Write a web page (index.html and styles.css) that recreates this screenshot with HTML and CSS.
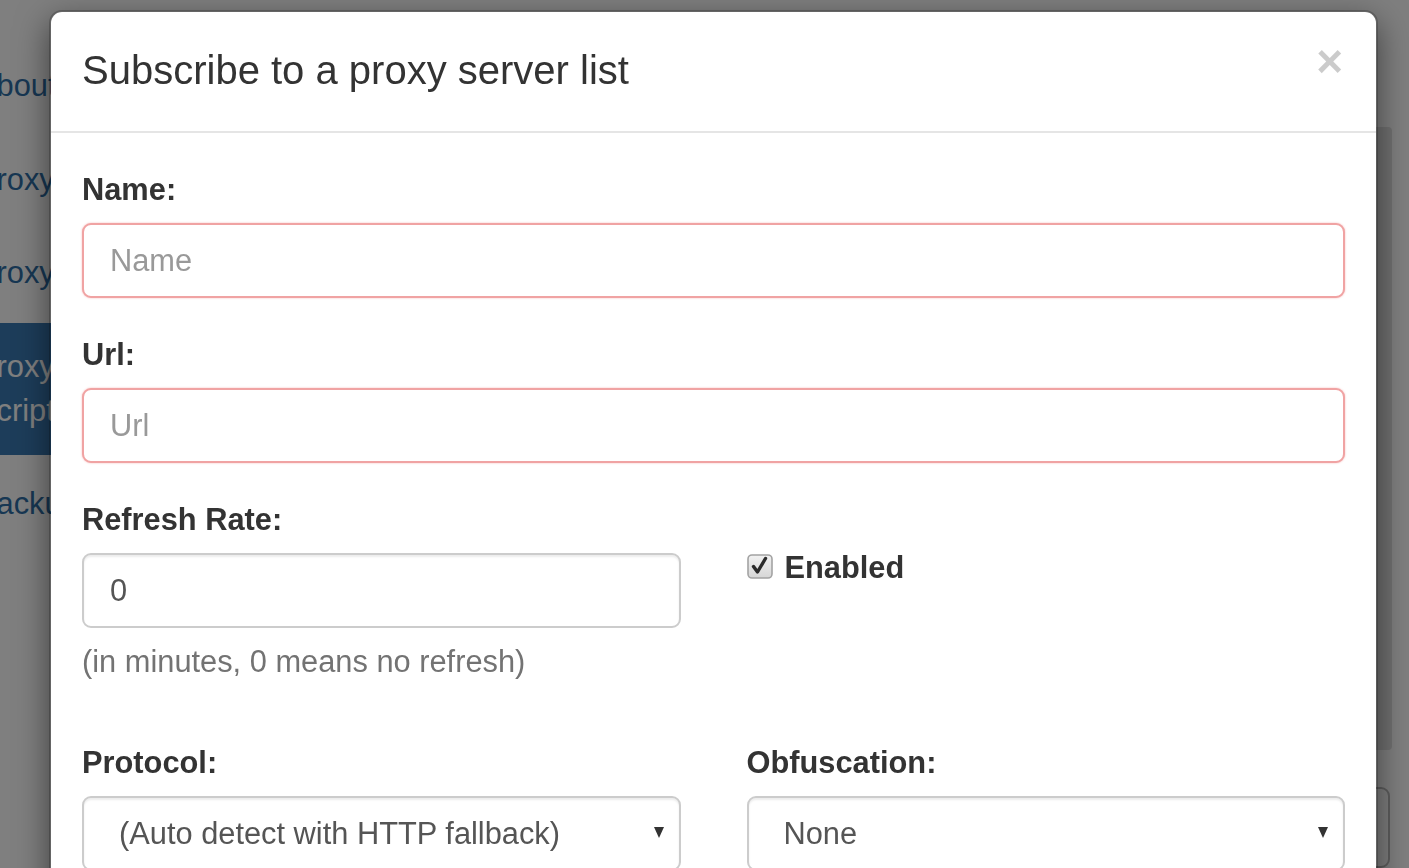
FILE: index.html
```html
<!DOCTYPE html>
<html lang="en">
<head>
<meta charset="utf-8">
<title>Subscribe to a proxy server list</title>
<link rel="stylesheet" href="styles.css">
</head>
<body>
<div class="page">
  <nav class="sidebar">
    <a class="nav-link">About</a>
    <a class="nav-link">Proxy Servers</a>
    <a class="nav-link">Proxy Rules</a>
    <a class="nav-link active">Proxy<br>Scripts</a>
    <a class="nav-link">Backup</a>
  </nav>
  <main class="content">
    <div class="panel"></div>
    <div class="control"></div>
  </main>
</div>
<div class="backdrop"></div>
<div class="modal" role="dialog">
  <div class="modal-header">
    <h4 class="modal-title">Subscribe to a proxy server list</h4>
    <button class="close" type="button">&times;</button>
  </div>
  <div class="modal-body">
    <div class="form-group">
      <label class="label">Name:</label>
      <input class="form-control invalid" type="text" placeholder="Name">
    </div>
    <div class="form-group">
      <label class="label">Url:</label>
      <input class="form-control invalid" type="text" placeholder="Url">
    </div>
    <div class="row form-group">
      <div class="col">
        <label class="label">Refresh Rate:</label>
        <input class="form-control" type="text" value="0">
        <p class="help">(in minutes, 0 means no refresh)</p>
      </div>
      <div class="col">
        <div class="checkbox">
          <svg class="check" width="26" height="25" viewBox="0 0 26 25">
            <defs>
              <linearGradient id="cb" x1="0" y1="0" x2="0" y2="1">
                <stop offset="0" stop-color="#f2f2f2"/>
                <stop offset="1" stop-color="#d6d6d6"/>
              </linearGradient>
            </defs>
            <rect x="1" y="1" width="24" height="23" rx="4" fill="url(#cb)" stroke="#a3a3a3" stroke-width="1.6"/>
            <path d="M6.5 12.5 L10.5 18 L18.5 4.5" fill="none" stroke="#2b2b2b" stroke-width="3.4" stroke-linecap="round" stroke-linejoin="round"/>
          </svg>
          <span class="check-label">Enabled</span>
        </div>
      </div>
    </div>
    <div class="row">
      <div class="col">
        <label class="label">Protocol:</label>
        <div class="select-wrap">
          <select class="form-control select">
            <option>(Auto detect with HTTP fallback)</option>
          </select>
        </div>
      </div>
      <div class="col">
        <label class="label">Obfuscation:</label>
        <div class="select-wrap">
          <select class="form-control select">
            <option>None</option>
          </select>
        </div>
      </div>
    </div>
  </div>
</div>
</body>
</html>
```
FILE: styles.css
```css
html, body {
  margin: 0;
  padding: 0;
  height: 100%;
  overflow: hidden;
}

body {
  font-family: "Liberation Sans", Arial, sans-serif;
  font-size: 30.8px;
  line-height: 44px;
  color: #333;
  background: #fff;
}

/* page behind the dialog */
.page {
  display: flex;
  height: 868px;
}

.sidebar {
  flex: 0 0 330px;
  margin-left: -57px;
  padding-top: 42px;
  display: flex;
  flex-direction: column;
  gap: 5.5px;
}

.nav-link {
  display: block;
  padding: 22px 33px;
  line-height: 44px;
  color: #2f6fa6;
  white-space: nowrap;
  border-radius: 9px;
}

.nav-link.active {
  background: #3a7bb4;
  color: #fff;
}

.content {
  flex: 1;
  display: flex;
  flex-direction: column;
  padding: 127px 17px 0 40px;
}

.panel {
  height: 651px;
  background: #e2e2e2;
  border-radius: 4px;
}

.control {
  margin-top: 37px;
  margin-right: 2px;
  height: 80px;
  border: 2px solid #bdbdbd;
  border-radius: 9px;
  background: #fff;
}

.backdrop {
  position: fixed;
  inset: 0;
  background: rgba(0, 0, 0, 0.5);
}

/* dialog */
.modal {
  position: absolute;
  top: 10px;
  left: 49px;
  width: 1329px;
  height: 900px;
  box-sizing: border-box;
  background: #fff;
  background-clip: padding-box;
  border: 2px solid rgba(0, 0, 0, 0.2);
  border-radius: 13px;
  box-shadow: 0 11px 33px rgba(0, 0, 0, 0.5);
}

.modal-header {
  display: flex;
  justify-content: space-between;
  align-items: flex-start;
  padding: 29.5px 33px 32.5px 31px;
  border-bottom: 2px solid #e5e5e5;
}

.modal-title {
  margin: 0;
  font-size: 40px;
  line-height: 57px;
  font-weight: normal;
  color: #333;
}

.close {
  margin-top: -4px;
  padding: 0;
  border: 0;
  background: transparent;
  font-family: "Liberation Sans", Arial, sans-serif;
  font-size: 46px;
  font-weight: bold;
  line-height: 1;
  color: #000;
  opacity: 0.2;
}

.modal-body {
  padding: 35px 31px 33px 31px;
}

.form-group {
  margin-bottom: 35px;
}

.label {
  display: block;
  font-weight: bold;
  line-height: 44px;
  margin-bottom: 11px;
  color: #333;
}

.form-control {
  display: block;
  width: 100%;
  height: 75px;
  box-sizing: border-box;
  margin: 0;
  padding: 0 26px;
  font-family: "Liberation Sans", Arial, sans-serif;
  font-size: 30.8px;
  color: #555;
  background: #fff;
  border: 2px solid #ccc;
  border-radius: 9px;
  box-shadow: inset 0 2px 2px rgba(0, 0, 0, 0.075);
  outline: none;
}

.form-control::placeholder {
  color: #999;
}

.form-control.invalid {
  border-color: #f0a3a3;
  box-shadow: 0 0 2px rgba(235, 90, 90, 0.45);
}

.row {
  display: grid;
  grid-template-columns: 1fr 1fr;
  column-gap: 66px;
}

.help {
  margin: 12px 0 22px;
  line-height: 44px;
  color: #737373;
}

.checkbox {
  display: flex;
  align-items: center;
  gap: 12px;
  margin-top: 48px;
  line-height: 44px;
}

.check {
  display: block;
  flex: 0 0 auto;
  margin-top: -3px;
}

.check-label {
  font-weight: bold;
  color: #333;
}

.select-wrap {
  position: relative;
}

.select-wrap::after {
  content: "";
  position: absolute;
  right: 17px;
  top: 31px;
  border-left: 5px solid transparent;
  border-right: 5px solid transparent;
  border-top: 11px solid #333;
}

.select {
  appearance: none;
  -webkit-appearance: none;
  padding: 0 40px 0 35px;
  box-shadow: inset 0 2px 2px rgba(0, 0, 0, 0.075);
}
```
